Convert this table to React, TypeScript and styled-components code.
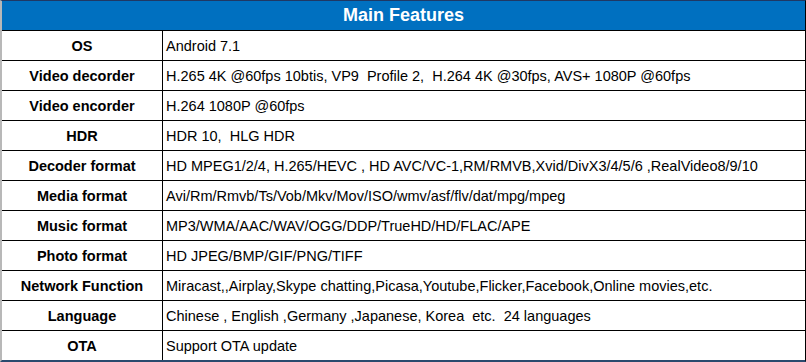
import styled, { createGlobalStyle } from "styled-components"

const GlobalStyle = createGlobalStyle`
  body {
    margin: 0;
    background: #fff;
    font-family: "Liberation Sans", Arial, sans-serif;
  }
`

const Table = styled.div`
  width: 806px;
  box-sizing: border-box;
  border-top: 1px solid #1f3864;
  border-left: 2px solid #b8b8b8;
  border-right: 1px solid #000;
  border-bottom: 2px solid #2a4a6e;
`

const Header = styled.div`
  height: 29px;
  background: #0070c0;
  color: #fff;
  font-weight: bold;
  font-size: 18px;
  display: flex;
  align-items: center;
  justify-content: center;
`

const Row = styled.div`
  display: grid;
  grid-template-columns: 160px 1fr;
  height: 30px;
  box-sizing: border-box;
  border-top: 1px solid #000;
  font-size: 14.5px;
  color: #000;
`

const Label = styled.div`
  display: flex;
  align-items: center;
  justify-content: center;
  font-weight: bold;
`

const Value = styled.div`
  display: flex;
  align-items: center;
  padding-left: 3px;
  border-left: 1px solid #000;
  white-space: pre;
`

const features: [string, string][] = [
  ["OS", "Android 7.1"],
  ["Video decorder", "H.265 4K @60fps 10btis, VP9  Profile 2,  H.264 4K @30fps, AVS+ 1080P @60fps"],
  ["Video encorder", "H.264 1080P @60fps"],
  ["HDR", "HDR 10,  HLG HDR"],
  ["Decoder format", "HD MPEG1/2/4, H.265/HEVC , HD AVC/VC-1,RM/RMVB,Xvid/DivX3/4/5/6 ,RealVideo8/9/10"],
  ["Media format", "Avi/Rm/Rmvb/Ts/Vob/Mkv/Mov/ISO/wmv/asf/flv/dat/mpg/mpeg"],
  ["Music format", "MP3/WMA/AAC/WAV/OGG/DDP/TrueHD/HD/FLAC/APE"],
  ["Photo format", "HD JPEG/BMP/GIF/PNG/TIFF"],
  ["Network Function", "Miracast,,Airplay,Skype chatting,Picasa,Youtube,Flicker,Facebook,Online movies,etc."],
  ["Language", "Chinese , English ,Germany ,Japanese, Korea  etc.  24 languages"],
  ["OTA", "Support OTA update"],
]

export default function App() {
  return (
    <>
      <GlobalStyle />
      <Table>
        <Header>Main Features</Header>
        {features.map(([label, value]) => (
          <Row key={label}>
            <Label>{label}</Label>
            <Value>{value}</Value>
          </Row>
        ))}
      </Table>
    </>
  )
}
